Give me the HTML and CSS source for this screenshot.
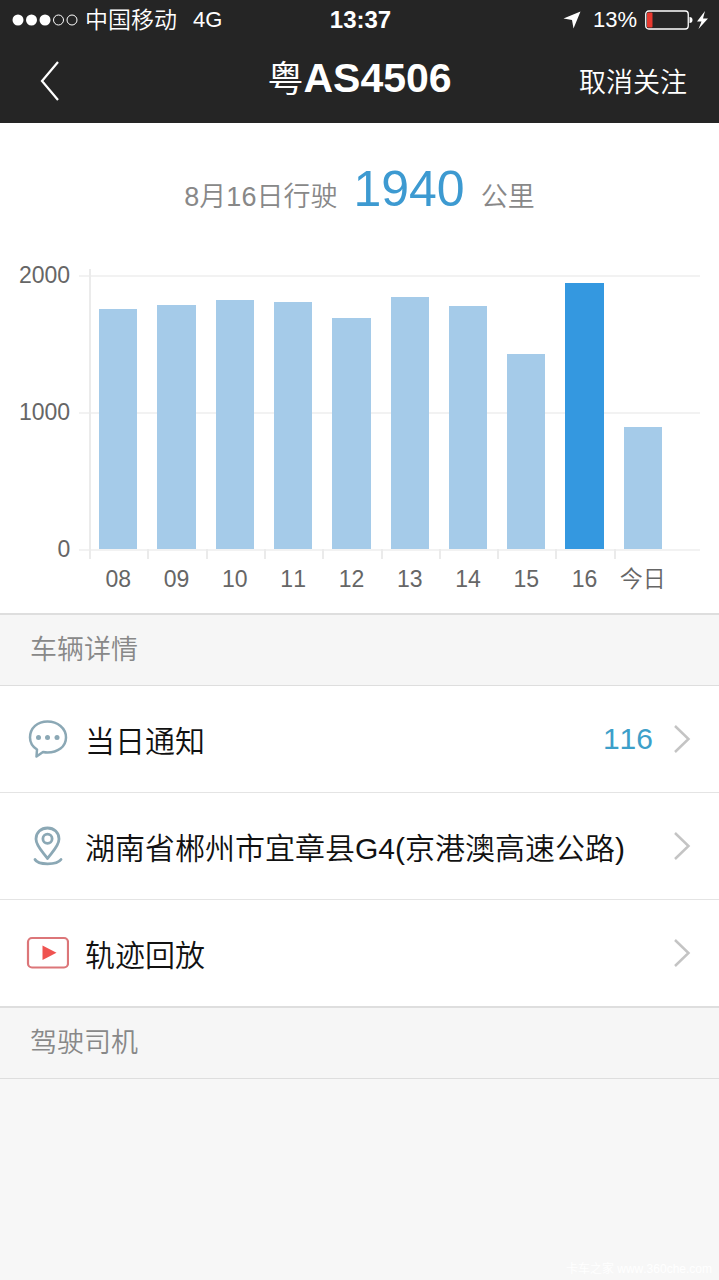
FILE: index.html
```
<!DOCTYPE html>
<html lang="zh-CN">
<head>
  <meta charset="UTF-8">
  <meta name="viewport" content="width=device-width, initial-scale=1">
  <title>粤AS4506</title>
  <link rel="stylesheet" href="styles.css">
</head>
<body>
  <header class="header">
    <div class="status">
      <div class="status__left">
        <svg class="status__signal" width="66" height="12" viewBox="0 0 66 12">
          <g fill="#fff">
            <circle cx="6" cy="6" r="5.5"/>
            <circle cx="19.500" cy="6" r="5.5"/>
            <circle cx="33" cy="6" r="5.5"/>
          </g>
          <g fill="none" stroke="#fff">
            <circle cx="46.500" cy="6" r="5"/>
            <circle cx="60" cy="6" r="5"/>
          </g>
        </svg>
        <span class="status__carrier">中国移动</span>
        <span class="status__network">4G</span>
      </div>
      <div class="status__time">13:37</div>
      <div class="status__right">
        <svg width="18" height="18" viewBox="0 0 18 18">
          <path d="M17.500 0.500L10.500 17.500L9 9L0.500 7.500Z" fill="#fff"/>
        </svg>
        <span class="status__percent">13%</span>
        <svg width="64" height="20" viewBox="0 0 64 20">
          <rect x="0.750" y="1" width="42.500" height="18" rx="3" fill="none" stroke="#fff" stroke-width="1.300"/>
          <rect x="2" y="2.500" width="5.500" height="15" rx="1" fill="#e8392f"/>
          <path d="M44.500 7a3 3 0 0 1 0 6z" fill="#fff"/>
          <path d="M60 1L52 11.500h4.500L53.500 19L63 8.500h-5z" fill="#fff"/>
        </svg>
      </div>
    </div>
    <nav class="nav">
      <button class="nav__back" type="button" aria-label="返回">
        <svg width="20" height="42" viewBox="0 0 20 42">
          <path d="M18 2L2 21L18 40" fill="none" stroke="#fff" stroke-width="2.200"/>
        </svg>
      </button>
      <h1 class="nav__title"><span class="nav__province">粤</span>AS4506</h1>
      <button class="nav__action" type="button">取消关注</button>
    </nav>
  </header>

  <main>
    <section class="mileage">
      <p class="summary">
        <span>8月16日行驶</span>
        <strong class="summary__value">1940</strong>
        <span>公里</span>
      </p>
      <div class="chart">
        <div class="chart__scale">
          <span>2000</span>
          <span>1000</span>
          <span>0</span>
        </div>
        <div class="chart__plot">
          <div class="chart__lines">
            <i></i>
            <i></i>
            <i></i>
          </div>
          <div class="chart__bars">
            <div class="bar" style="height: 87.6%"></div>
            <div class="bar" style="height: 89%"></div>
            <div class="bar" style="height: 90.9%"></div>
            <div class="bar" style="height: 90%"></div>
            <div class="bar" style="height: 84.3%"></div>
            <div class="bar" style="height: 92.1%"></div>
            <div class="bar" style="height: 88.8%"></div>
            <div class="bar" style="height: 71.3%"></div>
            <div class="bar bar--active" style="height: 97.2%"></div>
            <div class="bar" style="height: 44.6%"></div>
          </div>
          <div class="chart__days">
            <span>08</span>
            <span>09</span>
            <span>10</span>
            <span>11</span>
            <span>12</span>
            <span>13</span>
            <span>14</span>
            <span>15</span>
            <span>16</span>
            <span>今日</span>
          </div>
        </div>
      </div>
    </section>

    <h2 class="heading">车辆详情</h2>
    <ul class="list">
      <li>
        <a class="row" href="#notice">
          <svg class="row__icon" width="44" height="44" viewBox="0 0 44 44" fill="none" stroke="#8ba8b5" stroke-width="2.500" stroke-linejoin="round">
            <path d="M12 32.500C7.500 29.700 5 25.500 5 20.500C5 11 12.500 4.500 22.500 4.500S41 11 41 20.500S32.500 35.500 22.500 35.500C21 35.500 19.500 35.300 18 35L11.500 39.500Z"/>
            <g fill="#8ba8b5" stroke="none">
              <circle cx="13.500" cy="20.500" r="2.500"/>
              <circle cx="22.500" cy="20.500" r="2.500"/>
              <circle cx="32" cy="20.500" r="2.500"/>
            </g>
          </svg>
          <span class="row__text">当日通知</span>
          <span class="row__count">116</span>
          <svg class="row__arrow" width="18" height="30" viewBox="0 0 18 30">
            <path d="M2 2L15.500 15L2 28" fill="none" stroke="#c4c4c4" stroke-width="2.500"/>
          </svg>
        </a>
      </li>
      <li>
        <a class="row" href="#location">
          <svg class="row__icon" width="44" height="44" viewBox="0 0 44 44" fill="none" stroke="#8ba8b5" stroke-width="2.800" stroke-linejoin="round" stroke-linecap="round">
            <path d="M22.500 34.500C18 28 11 22 11 15C11 8.500 16 4 22.500 4S34 8.500 34 15C34 22 27 28 22.500 34.500Z"/>
            <circle cx="22.500" cy="14.800" r="4.600"/>
            <path d="M10 35.500C13 41.200 32 41.200 36 35.500"/>
          </svg>
          <span class="row__text">湖南省郴州市宜章县G4(京港澳高速公路)</span>
          <svg class="row__arrow" width="18" height="30" viewBox="0 0 18 30">
            <path d="M2 2L15.500 15L2 28" fill="none" stroke="#c4c4c4" stroke-width="2.500"/>
          </svg>
        </a>
      </li>
      <li>
        <a class="row" href="#track">
          <svg class="row__icon" width="44" height="44" viewBox="0 0 44 44">
            <rect x="3" y="7" width="40" height="29.500" rx="4" fill="none" stroke="#dc7679" stroke-width="2.200"/>
            <path d="M17.500 14.500L31.500 21.700L17.500 29Z" fill="#ef5350"/>
          </svg>
          <span class="row__text">轨迹回放</span>
          <svg class="row__arrow" width="18" height="30" viewBox="0 0 18 30">
            <path d="M2 2L15.500 15L2 28" fill="none" stroke="#c4c4c4" stroke-width="2.500"/>
          </svg>
        </a>
      </li>
    </ul>
    <h2 class="heading">驾驶司机</h2>
  </main>

  <footer class="footer">卡车之家 www.360che.com</footer>
</body>
</html>
```
FILE: styles.css
```
* {
  box-sizing: border-box;
}

body {
  display: flex;
  flex-direction: column;
  min-height: 100vh;
  margin: 0;
  background: #f7f7f7;
  color: #111;
  font-family: "Liberation Sans", "Noto Sans CJK SC", sans-serif;
  font-weight: 350;
  font-kerning: none;
}

button {
  padding: 0;
  border: 0;
  background: none;
  color: inherit;
  font: inherit;
}

svg {
  display: block;
  flex: none;
}

/* header */
.header {
  background: #252525;
  color: #fff;
}

.status {
  display: grid;
  grid-template-columns: 1fr auto 1fr;
  align-items: center;
  height: 40px;
  padding: 0 10px 0 12px;
  font-size: 22px;
  line-height: 40px;
}

.status__left,
.status__right {
  display: flex;
  align-items: center;
}

.status__signal {
  margin-right: 7px;
}

.status__carrier {
  font-size: 23px;
}

.status__network {
  margin-left: 16px;
}

.status__time {
  font-size: 24px;
  font-weight: bold;
}

.status__right {
  justify-content: flex-end;
}

.status__percent {
  margin: 0 8px 0 12px;
}

.nav {
  display: grid;
  grid-template-columns: 1fr auto 1fr;
  align-items: center;
  height: 83px;
  padding: 0 32px 2px;
}

.nav__back {
  justify-self: start;
  margin-left: 8px;
}

.nav__title {
  margin: 0;
  padding-bottom: 4px;
  font-size: 41px;
  line-height: 48px;
}

.nav__province {
  font-size: 36px;
  font-weight: 400;
}

.nav__action {
  justify-self: end;
  font-size: 27px;
}

/* daily mileage */
.mileage {
  padding: 28px 19px 14px;
  background: #fff;
}

.summary {
  display: flex;
  justify-content: center;
  align-items: baseline;
  gap: 16px;
  margin: 0;
  color: #888;
  font-size: 27px;
  line-height: 76px;
}

.summary__value {
  color: #3d9ad1;
  font-size: 50px;
  font-weight: 400;
}

.chart {
  display: flex;
  gap: 9px;
  margin-top: 40px;
  color: #666;
  font-size: 23px;
}

.chart__scale {
  display: flex;
  flex-direction: column;
  justify-content: space-between;
  height: 300px;
  margin-top: -13px;
  line-height: 26px;
  text-align: right;
}

.chart__plot {
  display: grid;
  flex: 1;
  grid-template-rows: 274px auto;
}

.chart__lines,
.chart__bars {
  grid-area: 1 / 1;
}

.chart__lines {
  display: flex;
  flex-direction: column;
  justify-content: space-between;
  height: 276px;
}

.chart__lines i {
  height: 2px;
  background: #f2f2f2;
}

.chart__bars,
.chart__days {
  display: grid;
  grid-template-columns: repeat(10, 1fr);
  margin: 0 28px 0 10px;
}

.chart__bars {
  align-items: end;
  margin-top: -6px;
  padding-top: 6px;
  background: linear-gradient(#ebebeb, #ebebeb) left / 2px 100% no-repeat;
}

.bar {
  margin: 0 10px;
  background: #a5cbe9;
}

.bar--active {
  background: #3498e0;
}

.chart__days {
  line-height: 40px;
  text-align: center;
  white-space: nowrap;
}

.chart__days span::before {
  content: "";
  display: block;
  width: 2px;
  height: 10px;
  background: #ebebeb;
}

/* details */
.heading {
  margin: 0;
  padding: 0 30px;
  border: solid #dedede;
  border-width: 2px 0 1px;
  background: #f6f6f6;
  color: #888;
  font-size: 27px;
  font-weight: 350;
  line-height: 70px;
}

.list {
  margin: 0;
  padding: 0;
  background: #fff;
  list-style: none;
}

.list li + li {
  border-top: 1px solid #e4e4e4;
}

.row {
  display: flex;
  align-items: center;
  min-height: 106px;
  padding: 0 28px 0 25px;
  color: inherit;
  font-size: 30px;
  text-decoration: none;
}

.row__icon {
  margin-right: 16px;
}

.row__text {
  flex: 1;
}

.row__count {
  margin-right: 20px;
  color: #3d9fc9;
}

.footer {
  margin-top: auto;
  padding: 0 7px;
  color: #fff;
  font-size: 12px;
  line-height: 22px;
  text-align: right;
}
```
